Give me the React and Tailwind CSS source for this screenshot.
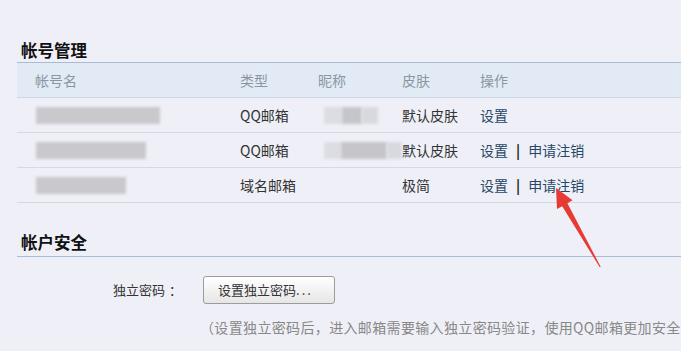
import React from 'react';

const rows = [
  { acc: [124], type: 'QQ邮箱', nick: true, skin: '默认皮肤', cancel: false },
  { acc: [110], type: 'QQ邮箱', nick: true, skin: '默认皮肤', cancel: true },
  { acc: [90], type: '域名邮箱', nick: false, skin: '极简', cancel: true },
];

function Blur({ w }) {
  return (
    <div className="flex h-[17px] items-center" style={{ width: w }}>
      <div className="h-[17px] w-full bg-[#c8c8cd] blur-[1.5px]" />
    </div>
  );
}

export default function App() {
  return (
    <div className="relative w-[681px] h-[351px] overflow-hidden bg-[#eff0f7] pl-[17px] text-[14px] text-[#333] font-['Microsoft_YaHei','Noto_Sans_CJK_SC',sans-serif]">
      {/* 帐号管理 */}
      <div className="pt-[40px] pb-[2px] pl-[4px] text-[16.5px] leading-[20px] font-bold text-[#111]">帐号管理</div>
      <div className="border-t border-[#a8bdd5]">
        <div className="grid grid-cols-[223px_78px_84px_78px_1fr] h-[35px] items-center bg-[#e2eaf5] text-[#8a96a3] border-b border-[#cdd6e2]">
          <div className="pl-[18px]">帐号名</div>
          <div>类型</div>
          <div>昵称</div>
          <div>皮肤</div>
          <div>操作</div>
        </div>
        {rows.map((r, i) => (
          <div key={i} className="grid grid-cols-[223px_78px_84px_78px_1fr] h-[35px] items-center border-b border-[#d3dae4]">
            <div className="pl-[19px]"><Blur w={r.acc[0]} /></div>
            <div>{r.type}</div>
            <div className="pl-[6px]">
              {r.nick && (
                <div className="flex h-[17px] items-center">
                  <div className="h-[17px] w-[18px] bg-[#dcdde3] blur-[1.5px]" />
                  <div className={i === 0 ? 'h-[17px] w-[20px] bg-[#c5c5ca] blur-[1.5px]' : 'h-[17px] w-[48px] bg-[#c5c5ca] blur-[1.5px]'} />
                  <div className="h-[17px] w-[16px] bg-[#d8d9df] blur-[1.5px]" />
                </div>
              )}
            </div>
            <div>{r.skin}</div>
            <div className="flex items-center text-[#274766]">
              <span>设置</span>
              {r.cancel && (
                <>
                  <span className="mx-[8px] font-bold text-[#222]">|</span>
                  <span>申请注销</span>
                </>
              )}
            </div>
          </div>
        ))}
      </div>

      {/* 帐户安全 */}
      <div className="mt-[29px] pb-[4px] pl-[4px] text-[16.5px] leading-[20px] font-bold text-[#111]">帐户安全</div>
      <div className="border-t border-[#a8bdd5]" />
      <div className="mt-[19px] flex items-center text-[13px]">
        <div className="w-[186px] pl-[96px] text-[#333]">
          独立密码<span className="ml-[4px]">：</span>
        </div>
        <button className="h-[28px] w-[132px] rounded-[3px] border border-[#9c9c9c] bg-gradient-to-b from-[#ffffff] to-[#e6e6e6] pl-[14px] text-left text-[#333] leading-[26px]">
          设置独立密码<span className="tracking-[2px]">...</span>
        </button>
      </div>
      <div className="mt-[13px] ml-[183px] whitespace-nowrap leading-[20px] tracking-[0.35px] text-[#888]">
        （设置独立密码后，进入邮箱需要输入独立密码验证，使用QQ邮箱更加安全
      </div>

      {/* red arrow */}
      <svg className="absolute left-0 top-0" width="681" height="351" viewBox="0 0 681 351">
        <polygon
          points="556,188 572.6,200.3 567.4,203.2 600.8,267 599.6,267 562.2,206.2 557,209.1"
          fill="#e83a34"
        />
      </svg>
    </div>
  );
}
